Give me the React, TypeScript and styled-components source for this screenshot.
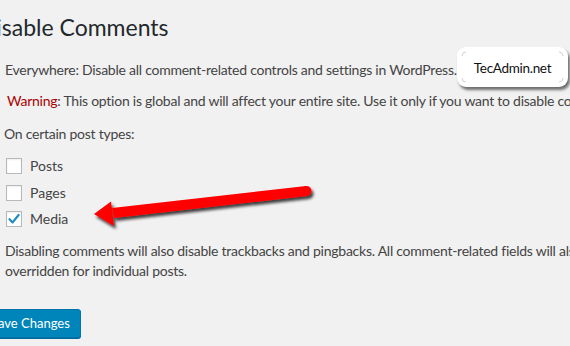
import React from "react";
import styled, { createGlobalStyle } from "styled-components";

const GlobalStyle = createGlobalStyle`
  html, body {
    margin: 0;
    padding: 0;
    background: #f1f1f1;
    overflow: hidden;
  }
  body {
    font-family: Lato, "Open Sans", sans-serif;
    color: #444;
  }
`;

const Page = styled.div`
  position: relative;
  width: 570px;
  height: 346px;
  overflow: hidden;
  background: #f1f1f1;
`;

const Wrap = styled.div`
  margin-left: -19px;
  padding-top: 12px;
  display: flex;
  flex-direction: column;
  align-items: flex-start;
`;

const Title = styled.h1`
  margin: 0 0 0 -2px;
  font-size: 23px;
  line-height: 30px;
  font-weight: 400;
  color: #23282d;
  white-space: nowrap;
`;

const Options = styled.div`
  margin-left: 24px;
  margin-top: 18px;
  display: flex;
  flex-direction: column;
  align-items: flex-start;
  font-size: 14px;
  letter-spacing: -0.25px;
`;

const Line = styled.p<{ $gap?: number; $indent?: number }>`
  margin: ${(p) => p.$gap ?? 0}px 0 0 ${(p) => p.$indent ?? 0}px;
  line-height: 20px;
  white-space: nowrap;
`;

const Warn = styled.span`
  color: #a00;
`;

const TypeList = styled.ul`
  list-style: none;
  margin: 12px 0 0 1px;
  padding: 0;
  display: flex;
  flex-direction: column;
  gap: 6.5px;
`;

const TypeRow = styled.li`
  display: flex;
  align-items: center;
  gap: 8px;
  height: 20px;
  line-height: 20px;
  letter-spacing: 0;
`;

const Box = styled.span<{ $checked?: boolean }>`
  width: 16px;
  height: 16px;
  box-sizing: border-box;
  border: 1px solid #b4b9be;
  background: #fff;
  box-shadow: inset 0 1px 2px rgba(0, 0, 0, 0.07);
  display: flex;
  align-items: center;
  justify-content: center;
  flex-shrink: 0;
`;

const Note = styled.p`
  margin: 12px 0 0 0;
  line-height: 20px;
  white-space: nowrap;
`;

const SaveButton = styled.button`
  margin: 28px 0 0 -1px;
  height: 29px;
  padding: 0 10px 1px;
  font-family: Lato, "Open Sans", sans-serif;
  font-size: 13px;
  color: #fff;
  background: #0085ba;
  border: 1px solid #0073aa;
  border-radius: 3px;
  box-shadow: 0 1px 0 #006799;
  white-space: nowrap;
`;

const Badge = styled.div`
  position: absolute;
  left: 457px;
  top: 47px;
  width: 111px;
  height: 40px;
  box-sizing: border-box;
  background: #fff;
  border-radius: 9px;
  box-shadow: 2px 3px 3px rgba(0, 0, 0, 0.55);
  display: flex;
  align-items: center;
  justify-content: center;
  padding-top: 1px;
  font-family: Lato, "Open Sans", sans-serif;
  font-size: 13.5px;
  letter-spacing: -0.3px;
  color: #111;
`;

const BadgeCorners = styled.svg`
  position: absolute;
  inset: 0;
`;

const ArrowLayer = styled.svg`
  position: absolute;
  left: 0;
  top: 0;
  pointer-events: none;
`;

const CheckMark = () => (
  <svg width="14" height="14" viewBox="0 0 14 14">
    <path d="M2.5 7.2 L5.6 10.4 L11.6 3" fill="none" stroke="#1e8cbe" strokeWidth="2.2" strokeLinecap="round" strokeLinejoin="round" />
  </svg>
);

const postTypes = [
  { label: "Posts", checked: false },
  { label: "Pages", checked: false },
  { label: "Media", checked: true },
];

const App: React.FC = () => {
  return (
    <Page>
      <GlobalStyle />
      <Wrap>
        <Title>Disable Comments</Title>
        <Options>
          <Line>Everywhere: Disable all comment-related controls and settings in WordPress.</Line>
          <Line $gap={11} $indent={2}>
            <Warn>Warning</Warn>: This option is global and will affect your entire site. Use it only if you want to disable comments everywhere.
          </Line>
          <Line $gap={13} $indent={-1}>On certain post types:</Line>
          <TypeList>
            {postTypes.map((t) => (
              <TypeRow key={t.label}>
                <Box $checked={t.checked}>{t.checked && <CheckMark />}</Box>
                {t.label}
              </TypeRow>
            ))}
          </TypeList>
          <Note>
            Disabling comments will also disable trackbacks and pingbacks. All comment-related fields will also be hidden from the edit/quick-edit screens of the affected posts. These settings cannot be
            <br />
            overridden for individual posts.
          </Note>
        </Options>
        <SaveButton>Save Changes</SaveButton>
      </Wrap>

      <ArrowLayer width="570" height="346" viewBox="0 0 570 346">
        <defs>
          <filter id="arrowShadow" x="-10%" y="-50%" width="120%" height="200%">
            <feDropShadow dx="2" dy="3" stdDeviation="1.4" floodColor="#000" floodOpacity="0.75" />
          </filter>
        </defs>
        <g filter="url(#arrowShadow)" fill="#ff0000">
          <path d="M306 186 L112 208 L114 218 L307 196 Z" />
          <circle cx="306.5" cy="191" r="5" />
          <path d="M94 214 L111 201.5 L114 226 Z" />
        </g>
      </ArrowLayer>

      <Badge>
        <BadgeCorners width="111" height="40" viewBox="0 0 111 40">
          <g fill="none" stroke="#c8c8c8" strokeWidth="0.8">
            <path d="M5 9 Q5 5 9 5" />
            <path d="M102 5 Q106 5 106 9" />
            <path d="M5 31 Q5 35 9 35" />
            <path d="M102 35 Q106 35 106 31" />
          </g>
        </BadgeCorners>
        TecAdmin.net
      </Badge>
    </Page>
  );
};

export default App;
